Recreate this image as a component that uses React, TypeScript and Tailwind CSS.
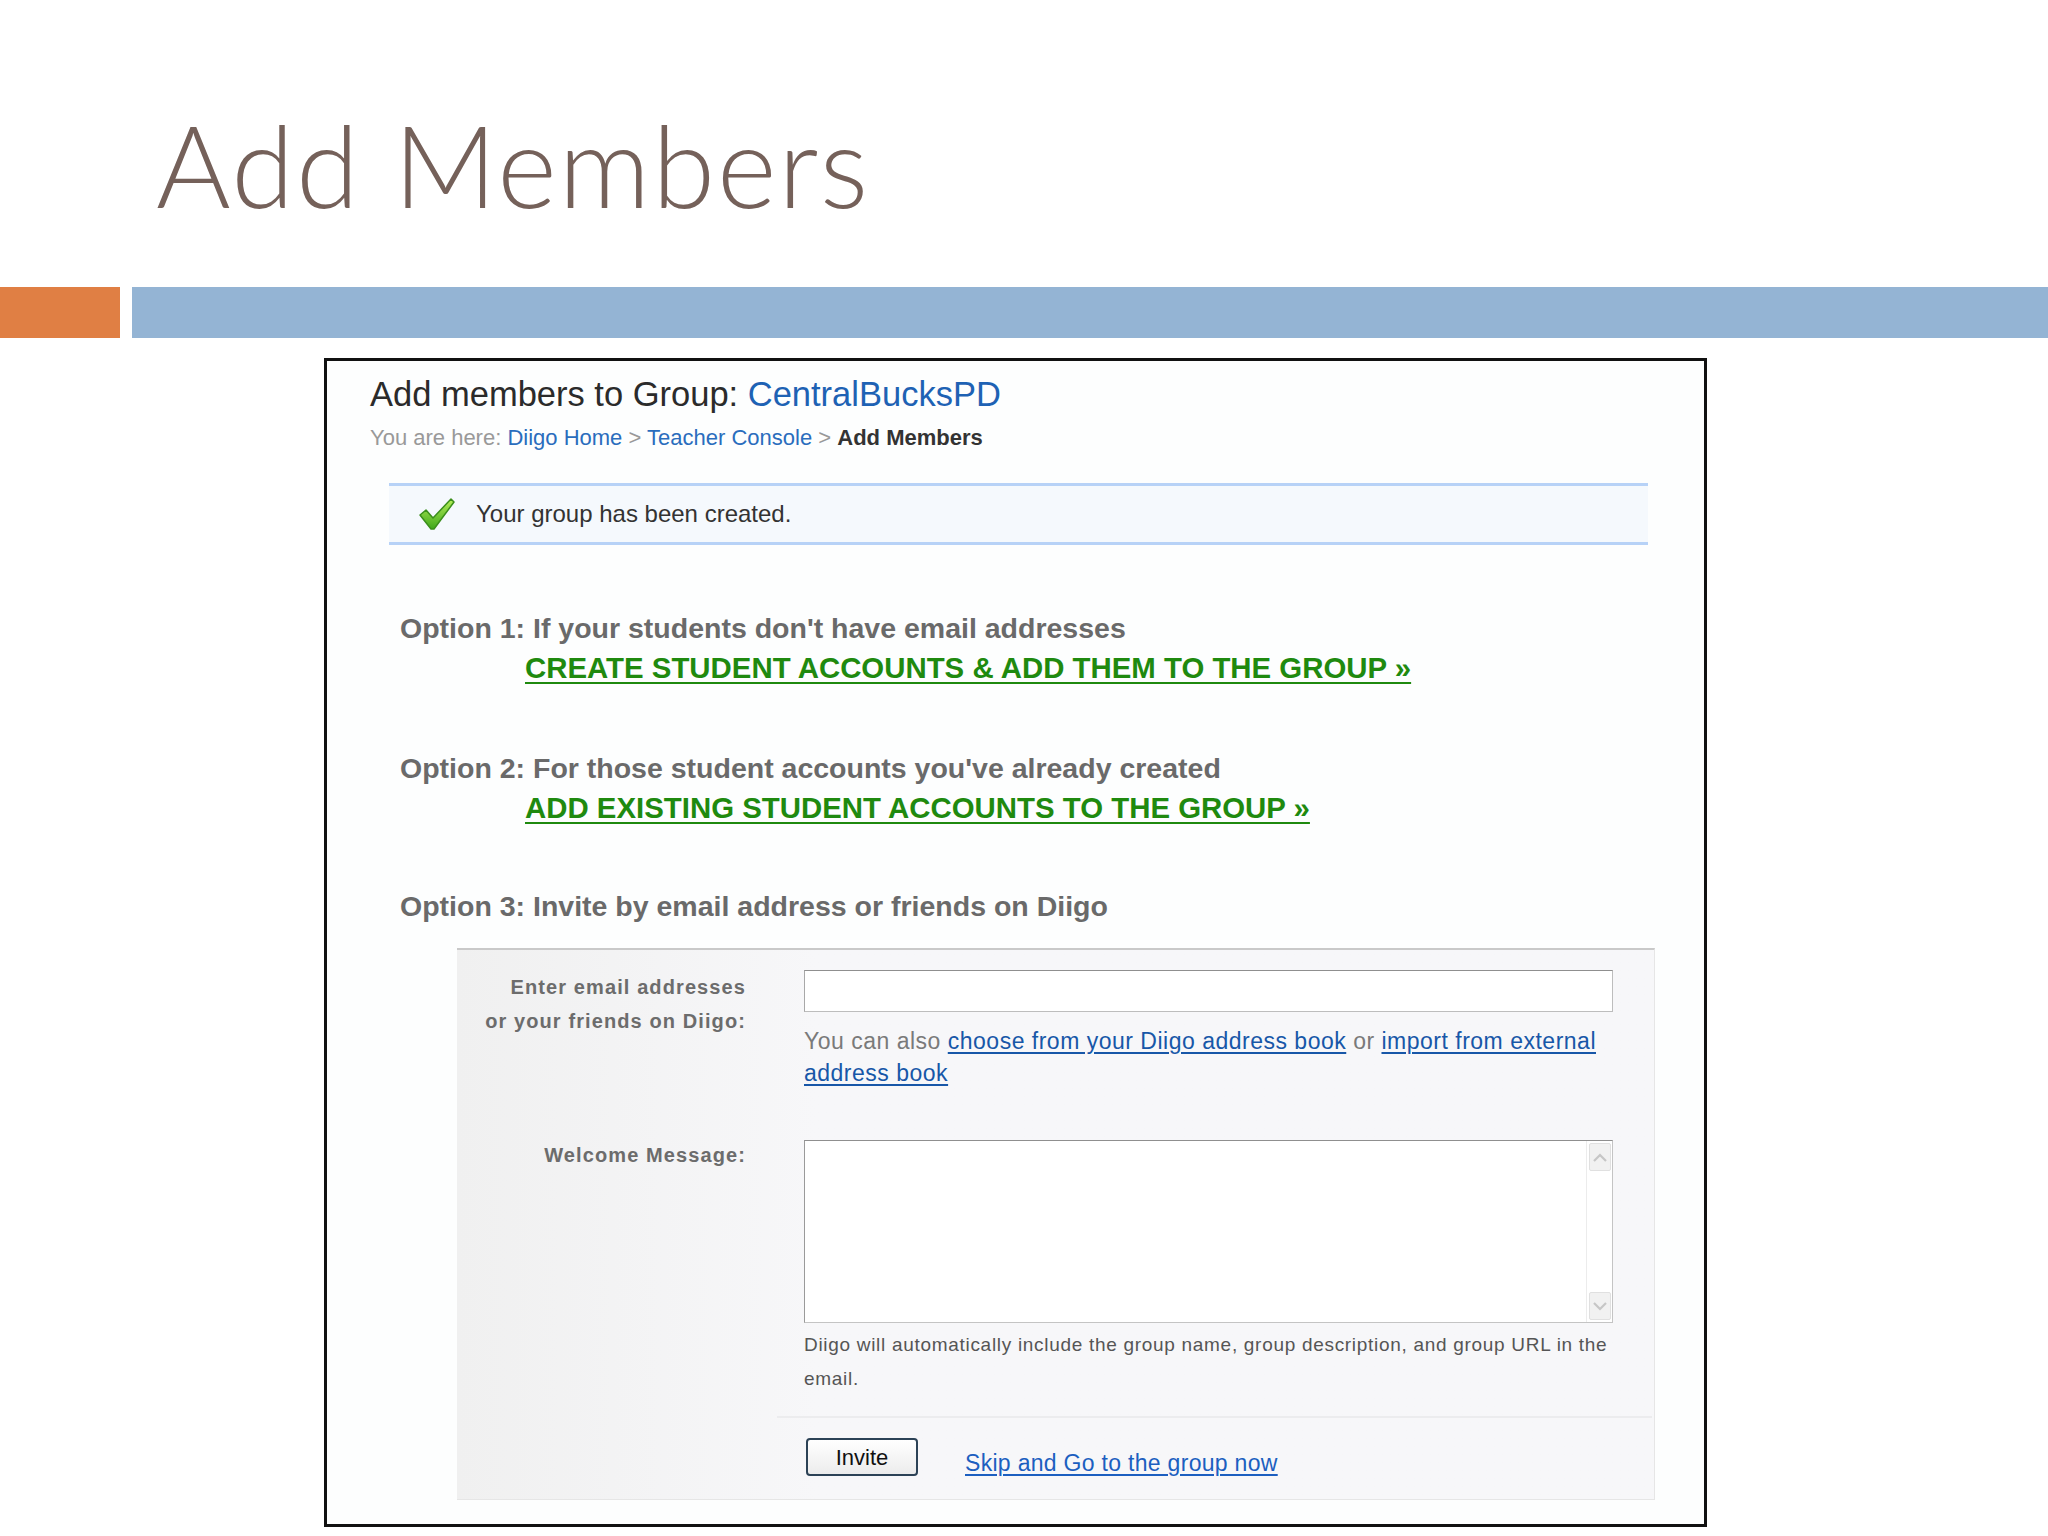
import React from "react";

function Check() {
  return (
    <svg width="38" height="34" viewBox="0 0 38 34">
      <defs>
        <linearGradient id="cg" x1="0" y1="0" x2="0" y2="1">
          <stop offset="0" stopColor="#b6ef5a" />
          <stop offset="1" stopColor="#3fa81a" />
        </linearGradient>
      </defs>
      <path
        d="M2 18 L8 13 L15 21 L33 2 L36 5 L16 32 L13 32 Z"
        fill="url(#cg)"
        stroke="#3b8f1c"
        strokeWidth="1.5"
        strokeLinejoin="round"
      />
    </svg>
  );
}

function ScrollArrow({ up }: { up: boolean }) {
  return (
    <div className="w-[22px] h-[28px] bg-[#f1f1f1] border border-[#e0e0e0] rounded-[2px] flex items-center justify-center">
      <svg width="14" height="9" viewBox="0 0 14 9">
        <path
          d={up ? "M1 8 L7 2 L13 8" : "M1 1 L7 7 L13 1"}
          fill="none"
          stroke="#c6c6c6"
          strokeWidth="2.2"
        />
      </svg>
    </div>
  );
}

export default function App() {
  const sans = { fontFamily: '"Liberation Sans", Arial, sans-serif' };
  return (
    <div className="w-[2048px] h-[1536px] bg-white overflow-hidden flex flex-col">
      <div className="h-[287px] pl-[156px] pt-[107px]">
        <div
          className="text-[114px] leading-none text-[#75615a] tracking-[1.9px]"
          style={{ fontFamily: 'Lato, "Open Sans", sans-serif', fontWeight: 300 }}
        >
          Add Members
        </div>
      </div>
      <div className="flex h-[51px] gap-[12px]">
        <div className="w-[120px] bg-[#e07f44]" />
        <div className="flex-1 bg-[#94b4d4]" />
      </div>
      <div
        className="ml-[324px] mt-[20px] w-[1383px] h-[1169px] border-[3px] border-[#111] bg-[#fdfefe] flex flex-col"
        style={sans}
      >
        <div className="pl-[43px] pt-[13px] text-[34.5px] leading-[40px] text-[#2b2b2b]">
          Add members to Group: <span className="text-[#1e62b4]">CentralBucksPD</span>
        </div>
        <div className="pl-[43px] mt-[10px] text-[22px] leading-[28px] text-[#999]">
          You are here: <span className="text-[#2a6dbd]">Diigo Home</span>{" "}
          <span className="text-[#999]">&gt;</span>{" "}
          <span className="text-[#2a6dbd]">Teacher Console</span>{" "}
          <span className="text-[#999]">&gt;</span>{" "}
          <span className="font-bold text-[#333]">Add Members</span>
        </div>
        <div className="ml-[62px] mr-[56px] mt-[31px] h-[62px] border-y-[3px] border-[#b7d2f7] bg-[#f5f9fd] flex items-center pl-[29px] gap-[20px]">
          <Check />
          <span className="text-[24px] text-[#333]">Your group has been created.</span>
        </div>

        <div className="pl-[73px] mt-[63px] text-[28.5px] leading-[40px] font-bold text-[#6a6a6a]">
          Option 1: If your students don't have email addresses
        </div>
        <div className="pl-[198px] text-[29.4px] leading-[40px] font-bold text-[#1f8a0f] underline underline-offset-[4px] decoration-[2px]">
          CREATE STUDENT ACCOUNTS &amp; ADD THEM TO THE GROUP »
        </div>
        <div className="pl-[73px] mt-[60px] text-[28.5px] leading-[40px] font-bold text-[#6a6a6a]">
          Option 2: For those student accounts you've already created
        </div>
        <div className="pl-[198px] text-[29.4px] leading-[40px] font-bold text-[#1f8a0f] underline underline-offset-[4px] decoration-[2px]">
          ADD EXISTING STUDENT ACCOUNTS TO THE GROUP »
        </div>
        <div className="pl-[73px] mt-[58px] text-[28.5px] leading-[40px] font-bold text-[#6a6a6a]">
          Option 3: Invite by email address or friends on Diigo
        </div>

        <div className="ml-[130px] mr-[49px] mt-[22px] h-[552px] border-t-2 border-[#c9c9c9] border-r border-b border-r-[#e6e6e6] border-b-[#e6e6e6] bg-gradient-to-r from-[#f0f0f0] to-[#f7f7f9] to-[30%] flex flex-col">
          <div className="flex pt-[20px]">
            <div className="w-[289px] text-right text-[20px] leading-[34px] font-bold text-[#6c6c6c] tracking-[1.1px]">
              Enter email addresses
              <br />
              or your friends on Diigo:
            </div>
            <div className="ml-[58px] w-[816px]">
              <div className="h-[42px] w-[809px] bg-white border border-[#bdbdbd] border-t-[#8f8f8f] border-l-[#a8a8a8]" />
              <p className="mt-[13px] text-[23px] leading-[32px] tracking-[0.5px] text-[#7a7a7a]">
                You can also{" "}
                <a className="text-[#1857a8] underline decoration-[2px] underline-offset-[3px]">
                  choose from your Diigo address book
                </a>{" "}
                or{" "}
                <a className="text-[#1857a8] underline decoration-[2px] underline-offset-[3px]">
                  import from external address book
                </a>
              </p>
            </div>
          </div>
          <div className="flex mt-[51px]">
            <div className="w-[289px] text-right text-[20px] leading-[34px] font-bold text-[#6c6c6c] tracking-[1.1px] -mt-[2px]">
              Welcome Message:
            </div>
            <div className="ml-[58px] w-[816px]">
              <div className="h-[183px] w-[809px] bg-white border border-[#c4c4c4] border-t-[#8f8f8f] border-l-[#9a9a9a] flex justify-end">
                <div className="w-[26px] h-full border-l border-[#ececec] flex flex-col justify-between items-center py-[2px]">
                  <ScrollArrow up />
                  <ScrollArrow up={false} />
                </div>
              </div>
              <div className="mt-[5px] w-[812px] text-[19px] leading-[34px] tracking-[0.7px] text-[#555]">
                Diigo will automatically include the group name, group description, and group URL in the email.
              </div>
            </div>
          </div>
          <div className="ml-[320px] mr-[2px] mt-[20px] border-t-2 border-[#ececee]" />
          <div className="flex items-end ml-[349px] mt-[20px] gap-[47px]">
            <div className="w-[112px] h-[38px] rounded-[4px] border-2 border-[#2c4256] bg-gradient-to-b from-white to-[#ececec] flex items-center justify-center text-[22px] text-[#111]">
              Invite
            </div>
            <span className="text-[23px] leading-[30px] tracking-[0.3px] text-[#1c5fc0] underline decoration-[2px] underline-offset-[3px] -mb-[2px]">
              Skip and Go to the group now
            </span>
          </div>
        </div>
      </div>
    </div>
  );
}
